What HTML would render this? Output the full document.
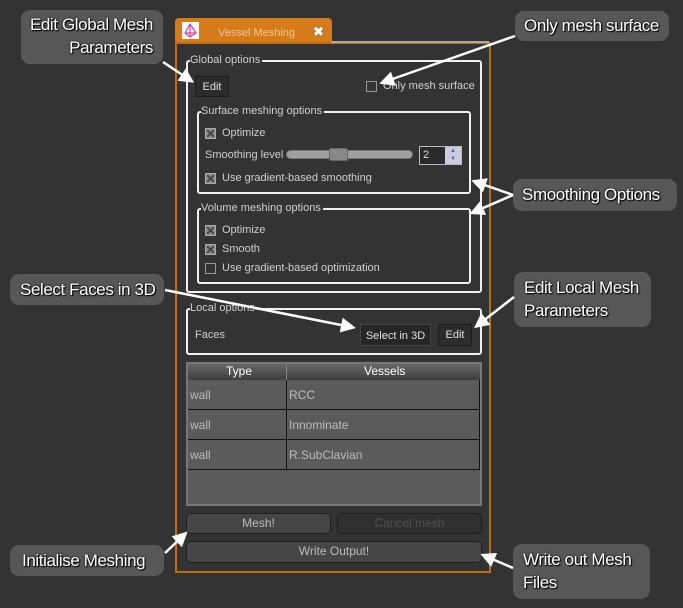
<!DOCTYPE html>
<html><head><style>
*{margin:0;padding:0;box-sizing:border-box}
body{width:683px;height:608px;background:#333333;position:relative;overflow:hidden;font-family:"Liberation Sans",sans-serif;font-size:11px;color:#c8c8c8}
.a{position:absolute}
.call{position:absolute;background:#575757;border-radius:9px;color:#fff;font-family:"Liberation Sans",sans-serif;font-size:17px;line-height:23px;letter-spacing:-0.4px;text-shadow:0 0 2px #000,1px 1px 1px #000;white-space:nowrap}
.grp{position:absolute;border:2px solid #f0f0f0;border-radius:3px}
.lg{position:absolute;top:-9px;left:2px;background:#333;padding:0 2px 0 0;color:#d0d0d0;font-size:11px;line-height:14px}
.cb{position:absolute;width:11px;height:11px;border:1px solid #999;background:#333}
.cb.x{background:#8a8a8a;border-color:#aaa}
.cb.x:after{content:"";position:absolute;left:1px;top:1px;width:7px;height:7px;background:linear-gradient(45deg,transparent 40%,#444 40%,#444 60%,transparent 60%),linear-gradient(-45deg,transparent 40%,#444 40%,#444 60%,transparent 60%)}
.t{position:absolute;font-size:11px;color:#d0d0d0;white-space:nowrap}
.btn{position:absolute;background:#2c2c2c;border:1px solid #1c1c1c;color:#e0e0e0;font-size:11px;text-align:center}
.rb{position:absolute;background:#464646;border:1px solid #1e1e1e;border-radius:5px;color:#bbb;font-size:12px;text-align:center;line-height:19px}
.cell{position:absolute;background:#5b5b5b;color:#bcbcbc;font-size:12px;line-height:30px;padding-left:2px;border-right:1px solid #111;border-bottom:1px solid #111}
</style></head><body>
<!-- tab -->
<div class="a" style="left:175px;top:18px;width:157px;height:25px;background:#d57b1a;border-radius:4px 4px 0 0"></div>
<div class="a" style="left:182px;top:22px;width:17px;height:17px;background:#fff"><svg width="17" height="17"><path d="M8 2L3 11L8 15L14 11Z M8 2L8 15 M3 11L14 11" fill="none" stroke="#e0409a" stroke-width="1.2"/></svg></div>
<div class="t" style="left:218px;top:27px;color:#eec8a0">Vessel Meshing</div>
<div class="t" style="left:313px;top:24px;color:#fff;font-weight:bold;font-size:13px;text-shadow:0 0 1px #000">✖</div>
<!-- panel -->
<div class="a" style="left:175px;top:42px;width:316px;height:531px;border:2px solid #c06c14"></div>
<div class="a" style="left:331px;top:41px;width:158px;height:2px;background:#aaa"></div>
<!-- global -->
<div class="grp" style="left:186px;top:60px;width:296px;height:233px"><div class="lg">Global options</div></div>
<div class="btn" style="left:195px;top:76px;width:34px;height:21px;line-height:20px">Edit</div>
<div class="cb" style="left:366px;top:81px"></div>
<div class="t" style="left:383px;top:80px">Only mesh surface</div>
<div class="grp" style="left:197px;top:111px;width:274px;height:83px"><div class="lg">Surface meshing options</div></div>
<div class="cb x" style="left:205px;top:128px"></div><div class="t" style="left:222px;top:127px">Optimize</div>
<div class="t" style="left:205px;top:149px">Smoothing level</div>
<div class="a" style="left:286px;top:150px;width:127px;height:9px;background:#a0a0a0;border-radius:5px;border:1px solid #777"></div>
<div class="a" style="left:329px;top:148px;width:19px;height:13px;background:#888;border:1px solid #666;border-radius:2px"></div>
<div class="a" style="left:419px;top:146px;width:43px;height:19px;border:1px solid #bbb;background:#2a2a2a"></div>
<div class="t" style="left:423px;top:149px;color:#ddd">2</div>
<div class="a" style="left:445px;top:147px;width:16px;height:17px;background:#ccd;font-size:6px;color:#46c;text-align:center;line-height:8px">▲<br>▼</div>
<div class="cb x" style="left:205px;top:173px"></div><div class="t" style="left:222px;top:172px">Use gradient-based smoothing</div>
<div class="grp" style="left:197px;top:208px;width:274px;height:76px"><div class="lg">Volume meshing options</div></div>
<div class="cb x" style="left:205px;top:225px"></div><div class="t" style="left:222px;top:224px">Optimize</div>
<div class="cb x" style="left:205px;top:244px"></div><div class="t" style="left:222px;top:243px">Smooth</div>
<div class="cb" style="left:205px;top:263px"></div><div class="t" style="left:222px;top:262px">Use gradient-based optimization</div>
<!-- local -->
<div class="grp" style="left:186px;top:308px;width:296px;height:47px"><div class="lg">Local options</div></div>
<div class="t" style="left:195px;top:329px">Faces</div>
<div class="btn" style="left:360px;top:324px;width:71px;height:22px;line-height:22px;background:#262626;border-color:#444">Select in 3D</div>
<div class="btn" style="left:438px;top:324px;width:34px;height:22px;line-height:21px">Edit</div>
<!-- table -->
<div class="a" style="left:186px;top:362px;width:296px;height:144px;background:#5b5b5b;border:2px solid #777"></div>
<div class="a" style="left:188px;top:364px;width:292px;height:16px;background:linear-gradient(#666,#3e3e3e)"></div>
<div class="a" style="left:286px;top:364px;width:1px;height:16px;background:#888"></div>
<div class="t" style="left:226px;top:364px;color:#fff;font-size:12px">Type</div>
<div class="t" style="left:364px;top:364px;color:#fff;font-size:12px">Vessels</div>
<div class="cell" style="left:188px;top:380px;width:99px;height:30px">wall</div><div class="cell" style="left:287px;top:380px;width:193px;height:30px">RCC</div>
<div class="cell" style="left:188px;top:410px;width:99px;height:30px">wall</div><div class="cell" style="left:287px;top:410px;width:193px;height:30px">Innominate</div>
<div class="cell" style="left:188px;top:440px;width:99px;height:30px">wall</div><div class="cell" style="left:287px;top:440px;width:193px;height:30px">R.SubClavian</div>
<!-- buttons -->
<div class="rb" style="left:186px;top:513px;width:145px;height:21px">Mesh!</div>
<div class="rb" style="left:337px;top:513px;width:145px;height:21px;background:#303030;color:#505050">Cancel mesh</div>
<div class="rb" style="left:186px;top:541px;width:296px;height:22px">Write Output!</div>
<!-- callouts -->
<div class="call" style="left:21px;top:10px;width:142px;height:54px;text-align:right;padding:3px 10px 0 0">Edit Global Mesh<br>Parameters</div>
<div class="call" style="left:515px;top:11px;width:154px;height:30px;padding:3px 0 0 9px">Only mesh surface</div>
<div class="call" style="left:513px;top:179px;width:164px;height:32px;padding:4px 0 0 9px">Smoothing Options</div>
<div class="call" style="left:10px;top:274px;width:154px;height:31px;padding:4px 0 0 10px">Select Faces in 3D</div>
<div class="call" style="left:514px;top:272px;width:137px;height:55px;padding:4px 0 0 10px">Edit Local Mesh<br>Parameters</div>
<div class="call" style="left:10px;top:545px;width:154px;height:31px;padding:4px 0 0 12px">Initialise Meshing</div>
<div class="call" style="left:513px;top:544px;width:137px;height:55px;padding:4px 0 0 10px">Write out Mesh<br>Files</div>
<!-- arrows -->
<svg class="a" style="left:0;top:0" width="683" height="608">
<defs><marker id="m" markerWidth="6" markerHeight="6" refX="4" refY="3" orient="auto"><path d="M0,0L6,3L0,6Z" fill="#fff"/></marker></defs>
<g stroke="#fff" stroke-width="2.5" fill="none" marker-end="url(#m)">
<line x1="163" y1="62" x2="190" y2="80"/>
<line x1="515" y1="36" x2="384" y2="82"/>
<line x1="513" y1="195" x2="476" y2="182"/>
<line x1="513" y1="195" x2="474" y2="212"/>
<line x1="165" y1="290" x2="351" y2="327"/>
<line x1="514" y1="297" x2="478" y2="325"/>
<line x1="165" y1="553" x2="184" y2="535"/>
<line x1="513" y1="568" x2="485" y2="556"/>
</g></svg>
</body></html>
